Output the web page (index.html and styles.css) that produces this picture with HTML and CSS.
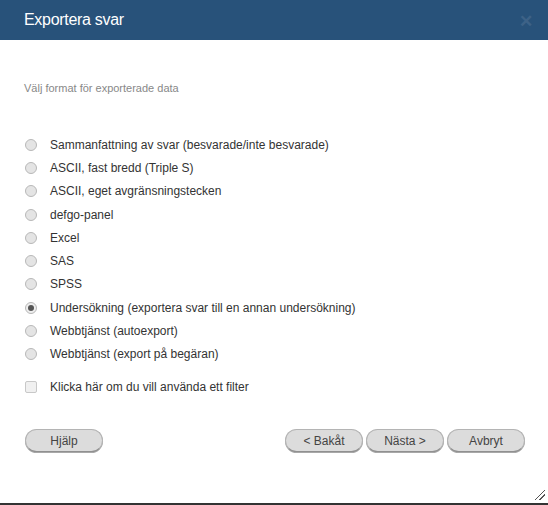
FILE: index.html
```html
<!DOCTYPE html>
<html>
<head>
  <title>Exportera svar</title>
  <link rel="stylesheet" href="styles.css">
</head>
<body>
  <div class="dialog">
    <div class="titlebar">
      <span class="title">Exportera svar</span>
      <span class="close">&#10005;</span>
    </div>

    <div class="content">
      <p class="intro">Välj format för exporterade data</p>

      <ul class="options">
        <li><span class="radio"></span>Sammanfattning av svar (besvarade/inte besvarade)</li>
        <li><span class="radio"></span>ASCII, fast bredd (Triple S)</li>
        <li><span class="radio"></span>ASCII, eget avgränsningstecken</li>
        <li><span class="radio"></span>defgo-panel</li>
        <li><span class="radio"></span>Excel</li>
        <li><span class="radio"></span>SAS</li>
        <li><span class="radio"></span>SPSS</li>
        <li><span class="radio checked"></span>Undersökning (exportera svar till en annan undersökning)</li>
        <li><span class="radio"></span>Webbtjänst (autoexport)</li>
        <li><span class="radio"></span>Webbtjänst (export på begäran)</li>
      </ul>

      <div class="filter"><span class="check"></span>Klicka här om du vill använda ett filter</div>

      <div class="buttons">
        <button>Hjälp</button>
        <div class="nav">
          <button>&lt; Bakåt</button>
          <button>Nästa &gt;</button>
          <button>Avbryt</button>
        </div>
      </div>
    </div>

    <div class="grip"></div>
  </div>
</body>
</html>
```

FILE: styles.css
```css
body {
  margin: 0;
  font-family: "Liberation Sans", Arial, sans-serif;
  background: #fff;
}

.dialog {
  position: relative;
  height: 503px;
  border-bottom: 2px solid #333;
}

.titlebar {
  height: 40px;
  background-color: #28527a;
  display: flex;
  align-items: center;
  justify-content: space-between;
  padding: 0 15px 0 24px;
}

.title {
  color: #fff;
  font-size: 16px;
  letter-spacing: -0.3px;
}

.close {
  color: #3d6287;
  font-size: 17px;
  font-weight: bold;
  line-height: 1;
  margin-top: 3px;
}

.content {
  padding: 0 23px 0 25px;
}

.intro {
  margin: 42px 0 39px -1px;
  font-size: 11px;
  color: #888;
}

.options {
  list-style-type: none;
  margin: 0;
  padding: 0;
}

.options li,
.filter {
  display: flex;
  align-items: center;
  height: 23.3px;
  font-size: 12px;
  color: #333;
}

.radio {
  width: 10px;
  height: 10px;
  border: 1px solid #b8b8b8;
  border-radius: 50%;
  background-color: #e4e4e4;
  margin-right: 13px;
  display: flex;
  align-items: center;
  justify-content: center;
}

.radio.checked {
  background-color: #eee;
}

.radio.checked::after {
  content: "";
  width: 6px;
  height: 6px;
  border-radius: 50%;
  background-color: #555;
}

.filter {
  margin-top: 9px;
}

.check {
  width: 10px;
  height: 10px;
  border: 1px solid #c8c8c8;
  border-radius: 2px;
  background-color: #f0f0f0;
  margin-right: 13px;
}

.buttons {
  display: flex;
  justify-content: space-between;
  margin-top: 31px;
}

.nav {
  display: flex;
  gap: 3px;
}

button {
  width: 78px;
  height: 23px;
  padding: 0;
  font-family: "Liberation Sans", Arial, sans-serif;
  font-size: 12px;
  color: #444;
  background-color: #dcdcdc;
  border: 1px solid #b4b4b4;
  border-bottom-color: #909090;
  border-radius: 12px;
  box-shadow: 0 1px 0 #a8a8a8;
}

.grip {
  position: absolute;
  right: 3px;
  bottom: 3px;
  width: 10px;
  height: 10px;
  background: linear-gradient(135deg, transparent 45%, #555 45%, #555 52%, transparent 52%, transparent 68%, #555 68%, #555 75%, transparent 75%);
}
```
